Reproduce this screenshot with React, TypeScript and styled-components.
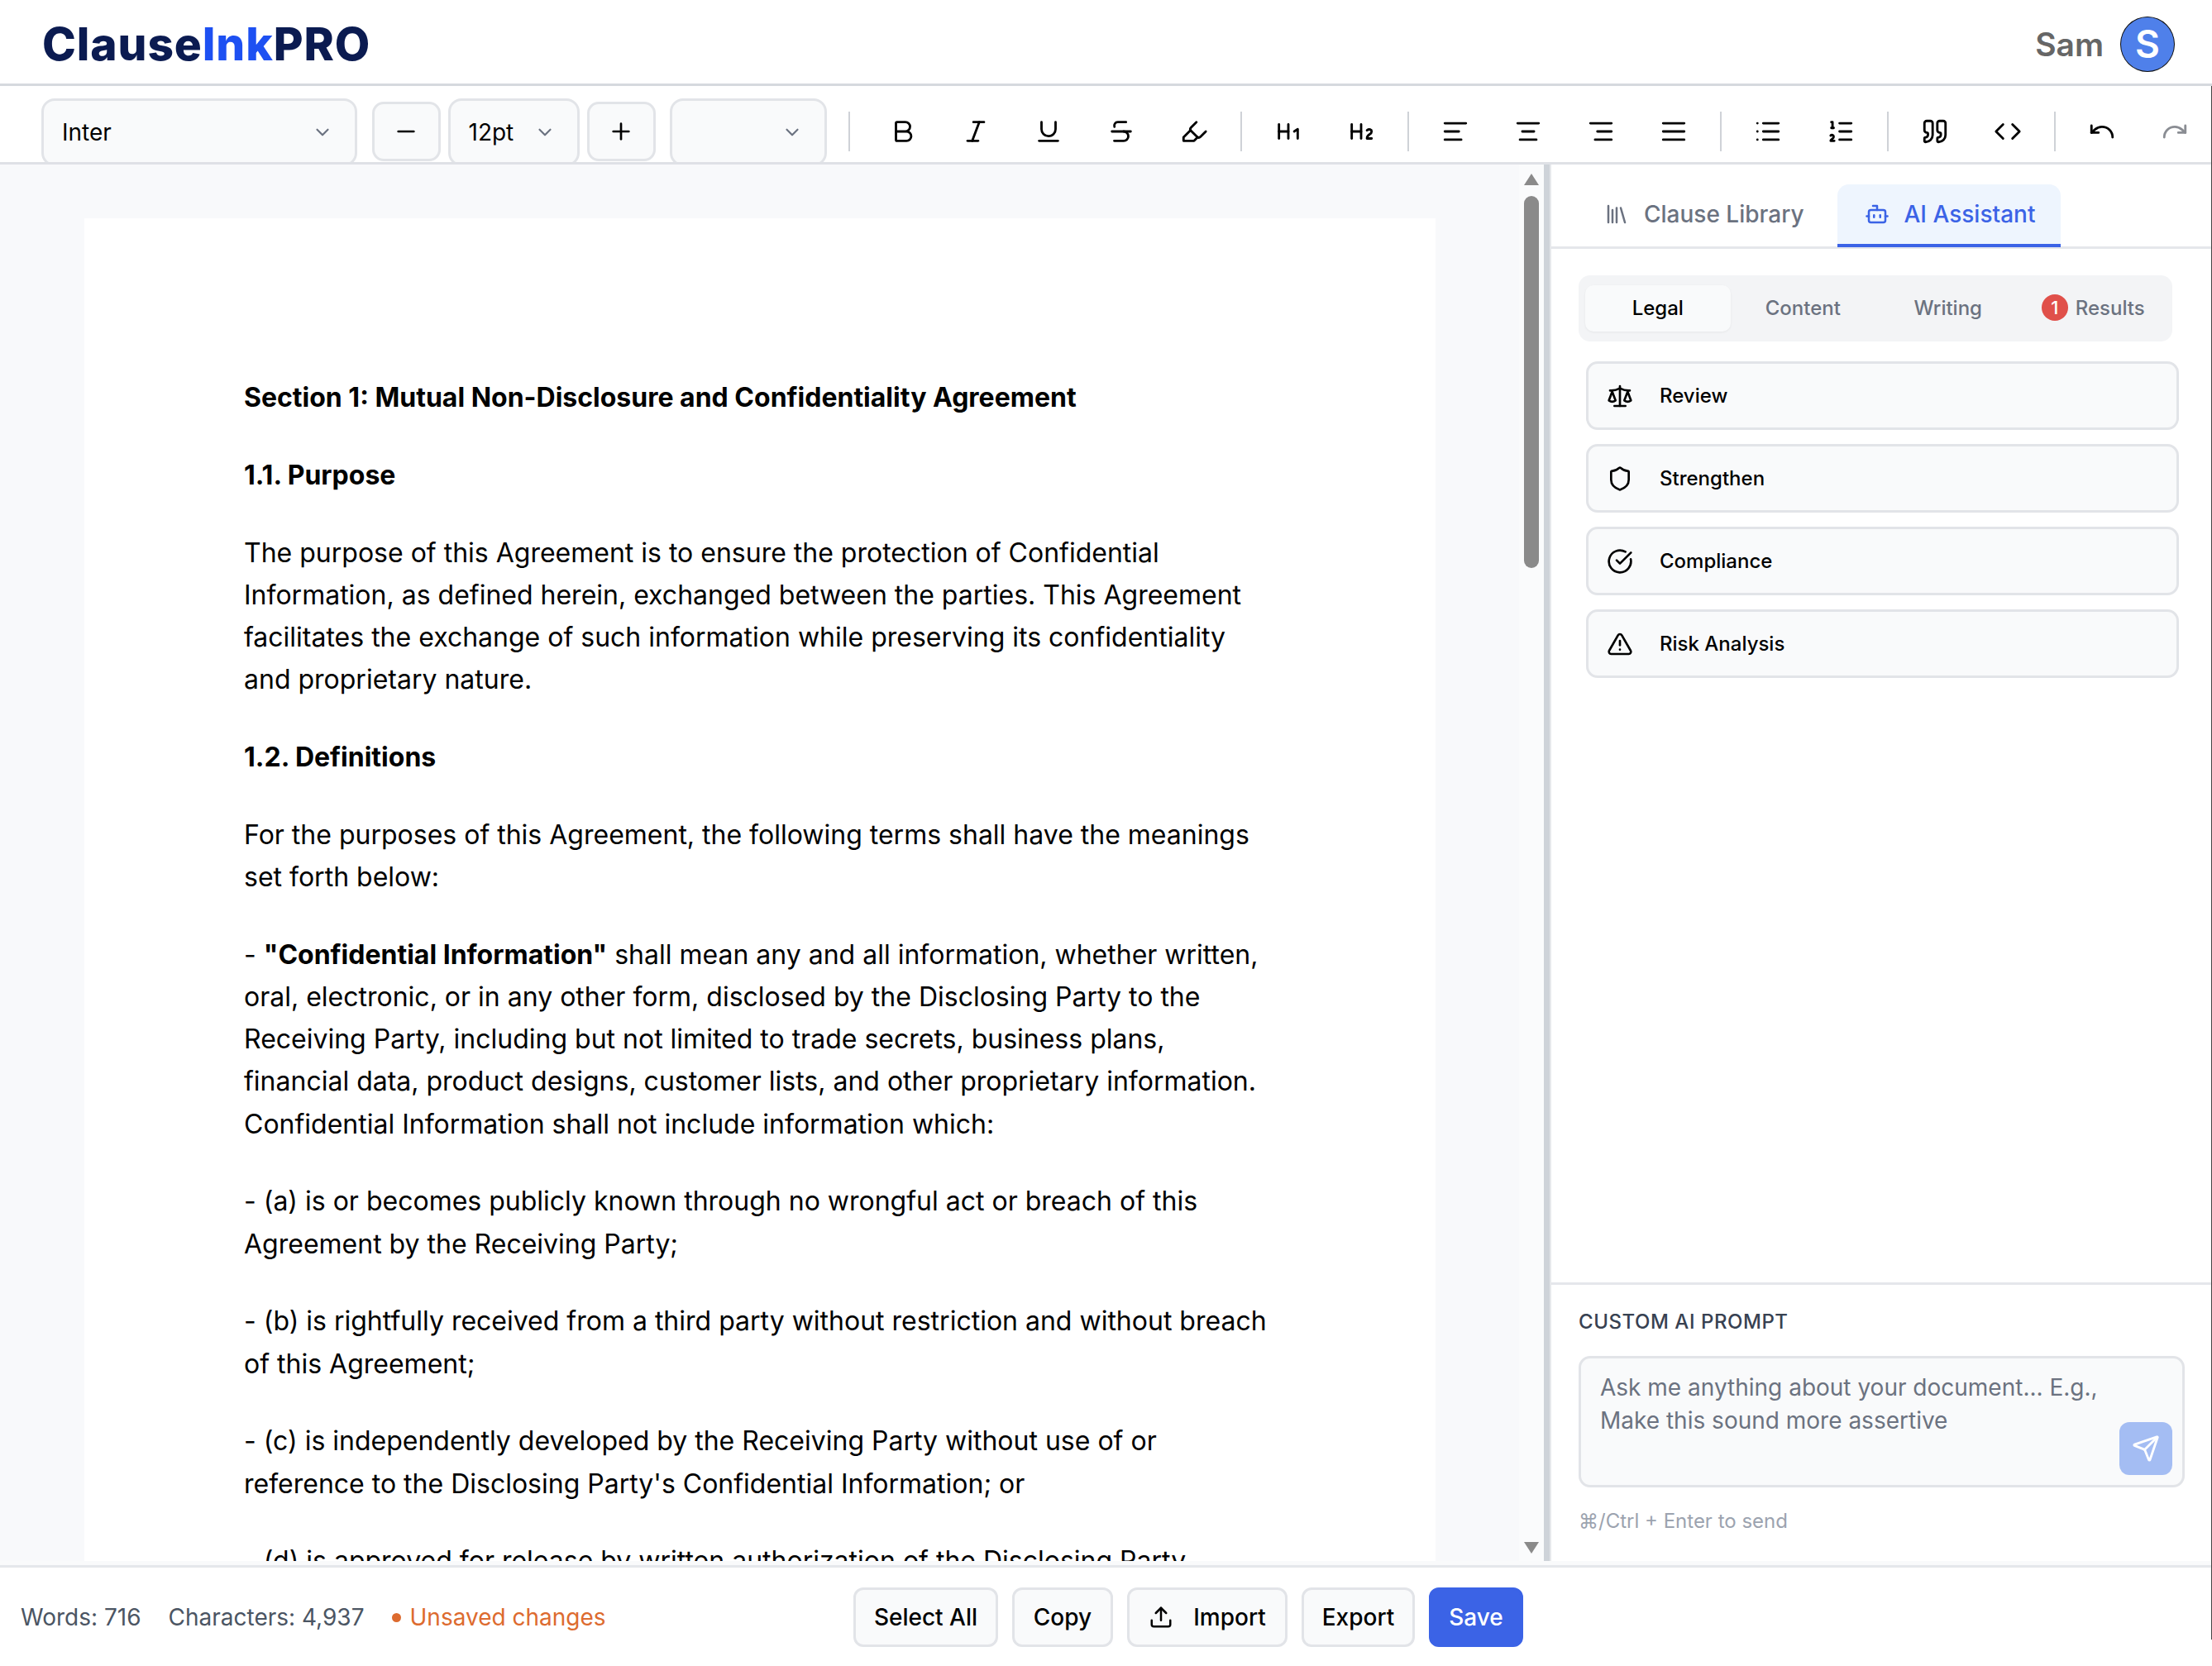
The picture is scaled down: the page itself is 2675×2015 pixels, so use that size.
import React from 'react';
import styled, { createGlobalStyle } from 'styled-components';
import {
  AlignCenter,
  AlignJustify,
  AlignLeft,
  AlignRight,
  Bold,
  Bot,
  ChevronDown,
  CircleCheckBig,
  Code,
  Heading1,
  Heading2,
  Highlighter,
  Italic,
  Library,
  List,
  ListOrdered,
  Minus,
  Plus,
  Quote,
  Redo,
  Scale,
  Send,
  Shield,
  Strikethrough,
  TriangleAlert,
  Underline,
  Undo,
  Upload,
} from 'lucide-react';

const GlobalStyle = createGlobalStyle`
  html, body {
    margin: 0;
    padding: 0;
    background: #fff;
  }
  body {
    font-family: Inter, "Liberation Sans", sans-serif;
    color: #000;
  }
  * {
    box-sizing: border-box;
  }
`;

const Shell = styled.div`
  position: relative;
  width: 2675px;
  height: 2015px;
  display: flex;
  flex-direction: column;
  overflow: hidden;
  background: #fff;

  &::after {
    content: '';
    position: absolute;
    top: 104px;
    right: 0;
    bottom: 32px;
    width: 1px;
    background: #444;
  }
`;

const Header = styled.header`
  height: 104px;
  flex: none;
  display: flex;
  align-items: center;
  justify-content: space-between;
  padding: 5px 45px 0 51px;
  border-bottom: 3px solid #d6d9de;
`;

const Logo = styled.div`
  font-size: 55px;
  font-weight: 800;
  letter-spacing: 0.9px;
  color: #0b1b51;
`;

const LogoAccent = styled.span`
  color: #1d50f2;
`;

const User = styled.div`
  display: flex;
  align-items: center;
  gap: 20px;
`;

const UserName = styled.span`
  font-size: 39px;
  font-weight: 600;
  color: #666;
`;

const Avatar = styled.div`
  width: 66px;
  height: 67px;
  border-radius: 50%;
  border: 1px solid #111;
  background: #4f80ea;
  color: #fff;
  font-size: 46px;
  font-weight: 600;
  display: flex;
  align-items: center;
  justify-content: center;
`;

const Toolbar = styled.div`
  height: 95px;
  flex: none;
  display: flex;
  align-items: flex-start;
  gap: 17.5px;
  padding: 15px 0 0 50px;
  border-bottom: 3px solid #dfe1e6;
  overflow: hidden;
`;

const Select = styled.div<{ $width: number }>`
  width: ${(p) => p.$width}px;
  height: 82px;
  flex: none;
  display: flex;
  align-items: center;
  justify-content: space-between;
  padding: 0 26px 0 22px;
  font-size: 28px;
  background: #f9fafb;
  border: 3px solid #e2e4e8;
  border-radius: 16px;
  color: #6b7280;

  span {
    color: #000;
  }
`;

const SizeGroup = styled.div`
  display: flex;
  align-items: flex-start;
  gap: 9px;
`;

const StepButton = styled.button`
  width: 83px;
  height: 72px;
  margin-top: 4px;
  flex: none;
  display: flex;
  align-items: center;
  justify-content: center;
  background: #f9fafb;
  border: 3px solid #e2e4e8;
  border-radius: 14px;
  color: #000;
  padding: 0;
`;

const ToolGroup = styled.div`
  display: flex;
  align-items: center;
  gap: 20px;
  height: 48px;
  margin: 16px 0 0 8px;
`;

const ToolButton = styled.div<{ $muted?: boolean }>`
  width: 68px;
  height: 48px;
  flex: none;
  display: flex;
  align-items: center;
  justify-content: center;
  color: ${(p) => (p.$muted ? '#8a8d93' : '#000')};
`;

const Divider = styled.div<{ $lead?: boolean }>`
  width: 2px;
  height: 48px;
  flex: none;
  margin: ${(p) => (p.$lead ? '0 10px 0 0' : '0 2px')};
  background: #cfd2d7;
`;

const Main = styled.div`
  flex: 1;
  min-height: 0;
  display: flex;
  padding-bottom: 5px;
  background: #f9fafb;
`;

const EditorArea = styled.div`
  flex: 1;
  min-width: 0;
  display: flex;
  background: #f8f9fb;
`;

const PageScroll = styled.div`
  flex: 1;
  min-width: 0;
  overflow: hidden;
  padding: 65px 101px 0 102px;
`;

const Page = styled.article`
  background: #fff;
  padding: 191px 194px 191px 193px;
  font-size: 32px;
  line-height: 51.2px;
  color: #000;

  p {
    margin: 0 0 42.6px;
  }

  strong {
    font-weight: 700;
  }
`;

const ScrollTrack = styled.div`
  width: 30px;
  flex: none;
  display: flex;
  flex-direction: column;
  align-items: center;
  justify-content: space-between;
  padding: 11px 0 9px;
  background: #fafbfc;
`;

const ScrollTop = styled.div`
  display: flex;
  flex-direction: column;
  align-items: center;
  gap: 13px;
`;

const ScrollArrow = styled.div<{ $down?: boolean }>`
  width: 0;
  height: 0;
  border-left: 9px solid transparent;
  border-right: 9px solid transparent;
  ${(p) => (p.$down ? 'border-top: 14px solid #8a8a8a;' : 'border-bottom: 14px solid #8a8a8a;')}
`;

const ScrollThumb = styled.div`
  width: 18px;
  height: 450px;
  border-radius: 9px;
  background: #8a8a8a;
`;

const Gutter = styled.div`
  width: 9px;
  flex: none;
  background: #ced3d9;
  border-right: 2px solid #e6e8eb;
`;

const Panel = styled.aside`
  width: 799px;
  flex: none;
  display: flex;
  flex-direction: column;
  background: #fff;
`;

const TabBar = styled.div`
  height: 102px;
  flex: none;
  display: flex;
  align-items: flex-end;
  gap: 9px;
  padding-left: 31px;
  border-bottom: 3px solid #e5e7eb;
`;

const Tab = styled.div<{ $active?: boolean }>`
  height: 76px;
  margin-bottom: -1px;
  display: flex;
  align-items: center;
  gap: 18px;
  padding: 0 31px 0 33px;
  font-size: 28px;
  font-weight: 500;
  border-radius: 14px 14px 0 0;
  color: ${(p) => (p.$active ? '#3b63e6' : '#6b7280')};
  background: ${(p) => (p.$active ? '#eef5fe' : 'transparent')};
  border-bottom: 4px solid ${(p) => (p.$active ? '#3b63e6' : 'transparent')};
`;

const PanelBody = styled.div`
  flex: 1;
  min-height: 0;
  padding: 32px 33px 0;
`;

const SubTabs = styled.div`
  width: 718px;
  height: 80px;
  display: grid;
  grid-template-columns: repeat(4, 1fr);
  padding: 12px 8px;
  margin-bottom: 24px;
  background: #f3f4f6;
  border-radius: 14px;
`;

const SubTab = styled.div<{ $active?: boolean }>`
  display: flex;
  align-items: center;
  justify-content: center;
  gap: 9px;
  padding-bottom: 2px;
  font-size: 24px;
  font-weight: 500;
  border-radius: 10px;
  color: ${(p) => (p.$active ? '#000' : '#6b7280')};
  background: ${(p) => (p.$active ? '#f9fafb' : 'transparent')};
  box-shadow: ${(p) => (p.$active ? '0 1px 3px rgba(0,0,0,0.06)' : 'none')};
`;

const Badge = styled.span`
  width: 32px;
  height: 32px;
  border-radius: 50%;
  background: #e0504a;
  color: #fff;
  font-size: 22px;
  display: flex;
  align-items: center;
  justify-content: center;
`;

const ActionList = styled.div`
  display: flex;
  flex-direction: column;
  gap: 17px;
  margin-left: 9px;
  width: 717px;
`;

const ActionButton = styled.div`
  height: 83px;
  display: flex;
  align-items: center;
  gap: 32px;
  padding: 0 22px;
  font-size: 24px;
  font-weight: 500;
  background: #f9fafb;
  border: 3px solid #e2e4e8;
  border-radius: 14px;
`;

const PromptBox = styled.div`
  height: 337px;
  flex: none;
  padding: 0 33px;
  border-top: 3px solid #e5e7eb;
`;

const PromptLabel = styled.div`
  margin-top: 30px;
  font-size: 24px;
  line-height: 30px;
  font-weight: 500;
  letter-spacing: 0.55px;
  color: #374151;
`;

const PromptInput = styled.div`
  position: relative;
  width: 733px;
  height: 159px;
  margin-top: 26px;
  padding: 15px 23px;
  font-size: 28px;
  line-height: 40px;
  color: #6b7280;
  background: #f9fafb;
  border: 3px solid #e2e4e8;
  border-radius: 14px;
`;

const SendButton = styled.div`
  position: absolute;
  right: 12px;
  bottom: 12px;
  width: 64px;
  height: 64px;
  display: flex;
  align-items: center;
  justify-content: center;
  border-radius: 12px;
  background: #a4bdf3;
  color: #fff;
`;

const PromptHint = styled.div`
  margin-top: 26px;
  font-size: 24px;
  line-height: 30px;
  color: #9ca3af;
`;

const Footer = styled.footer`
  height: 122px;
  flex: none;
  display: flex;
  align-items: center;
  padding: 1px 0 0 25px;
  border-top: 3px solid #e5e7eb;
  font-size: 28px;
  color: #4b5563;
`;

const Stats = styled.div`
  width: 1007px;
  flex: none;
  display: flex;
  align-items: center;
  gap: 33px;
`;

const Unsaved = styled.span`
  display: flex;
  align-items: center;
  gap: 11px;
  color: #dd6b2f;

  &::before {
    content: '';
    width: 11px;
    height: 11px;
    border-radius: 50%;
    background: #dd6b2f;
  }
`;

const FooterButtons = styled.div`
  display: flex;
  align-items: center;
  gap: 17px;
`;

const FooterButton = styled.div<{ $width: number; $primary?: boolean }>`
  width: ${(p) => p.$width}px;
  height: 72px;
  display: flex;
  align-items: center;
  justify-content: center;
  gap: 24px;
  font-size: 28px;
  font-weight: 500;
  border-radius: 12px;
  color: ${(p) => (p.$primary ? '#fff' : '#000')};
  background: ${(p) => (p.$primary ? '#3b63e6' : '#f9fafb')};
  border: 3px solid ${(p) => (p.$primary ? '#3b63e6' : '#e2e4e8')};
`;

const toolGroups = [
  [Bold, Italic, Underline, Strikethrough, Highlighter],
  [Heading1, Heading2],
  [AlignLeft, AlignCenter, AlignRight, AlignJustify],
  [List, ListOrdered],
  [Quote, Code],
];

const actions = [
  { icon: Scale, label: 'Review' },
  { icon: Shield, label: 'Strengthen' },
  { icon: CircleCheckBig, label: 'Compliance' },
  { icon: TriangleAlert, label: 'Risk Analysis' },
];

const paragraphs: React.ReactNode[] = [
  <strong>Section 1: Mutual Non-Disclosure and Confidentiality Agreement</strong>,
  <strong>1.1. Purpose</strong>,
  'The purpose of this Agreement is to ensure the protection of Confidential Information, as defined herein, exchanged between the parties. This Agreement facilitates the exchange of such information while preserving its confidentiality and proprietary nature.',
  <strong>1.2. Definitions</strong>,
  'For the purposes of this Agreement, the following terms shall have the meanings set forth below:',
  <>
    - <strong>"Confidential Information"</strong> shall mean any and all information, whether written, oral, electronic, or in any other form, disclosed by the Disclosing Party to the Receiving Party, including but not limited to trade secrets, business plans, financial data, product designs, customer lists, and other proprietary information. Confidential Information shall not include information which:
  </>,
  '- (a) is or becomes publicly known through no wrongful act or breach of this Agreement by the Receiving Party;',
  '- (b) is rightfully received from a third party without restriction and without breach of this Agreement;',
  "- (c) is independently developed by the Receiving Party without use of or reference to the Disclosing Party's Confidential Information; or",
  '- (d) is approved for release by written authorization of the Disclosing Party.',
];

const App: React.FC = () => (
  <Shell>
    <GlobalStyle />
    <Header>
      <Logo>
        Clause<LogoAccent>Ink</LogoAccent>PRO
      </Logo>
      <User>
        <UserName>Sam</UserName>
        <Avatar>S</Avatar>
      </User>
    </Header>

    <Toolbar>
      <Select $width={382}>
        <span>Inter</span>
        <ChevronDown size={26} />
      </Select>
      <SizeGroup>
        <StepButton>
          <Minus size={32} />
        </StepButton>
        <Select $width={159}>
          <span>12pt</span>
          <ChevronDown size={26} />
        </Select>
        <StepButton>
          <Plus size={32} />
        </StepButton>
      </SizeGroup>
      <Select $width={190}>
        <span />
        <ChevronDown size={26} />
      </Select>
      <ToolGroup>
        <Divider $lead />
        {toolGroups.map((group, i) => (
          <React.Fragment key={i}>
            {group.map((Icon, j) => (
              <ToolButton key={j}>
                <Icon size={34} />
              </ToolButton>
            ))}
            <Divider />
          </React.Fragment>
        ))}
        <ToolButton>
          <Undo size={34} />
        </ToolButton>
        <ToolButton $muted>
          <Redo size={34} />
        </ToolButton>
      </ToolGroup>
    </Toolbar>

    <Main>
      <EditorArea>
        <PageScroll>
          <Page>
            {paragraphs.map((text, i) => (
              <p key={i}>{text}</p>
            ))}
          </Page>
        </PageScroll>
        <ScrollTrack>
          <ScrollTop>
            <ScrollArrow />
            <ScrollThumb />
          </ScrollTop>
          <ScrollArrow $down />
        </ScrollTrack>
      </EditorArea>
      <Gutter />
      <Panel>
        <TabBar>
          <Tab>
            <Library size={30} />
            Clause Library
          </Tab>
          <Tab $active>
            <Bot size={30} />
            AI Assistant
          </Tab>
        </TabBar>
        <PanelBody>
          <SubTabs>
            <SubTab $active>Legal</SubTab>
            <SubTab>Content</SubTab>
            <SubTab>Writing</SubTab>
            <SubTab>
              <Badge>1</Badge>
              Results
            </SubTab>
          </SubTabs>
          <ActionList>
            {actions.map(({ icon: Icon, label }) => (
              <ActionButton key={label}>
                <Icon size={32} />
                {label}
              </ActionButton>
            ))}
          </ActionList>
        </PanelBody>
        <PromptBox>
          <PromptLabel>CUSTOM AI PROMPT</PromptLabel>
          <PromptInput>
            Ask me anything about your document... E.g.,
            <br />
            Make this sound more assertive
            <SendButton>
              <Send size={34} />
            </SendButton>
          </PromptInput>
          <PromptHint>⌘/Ctrl + Enter to send</PromptHint>
        </PromptBox>
      </Panel>
    </Main>

    <Footer>
      <Stats>
        <span>Words: 716</span>
        <span>Characters: 4,937</span>
        <Unsaved>Unsaved changes</Unsaved>
      </Stats>
      <FooterButtons>
        <FooterButton $width={175}>Select All</FooterButton>
        <FooterButton $width={122}>Copy</FooterButton>
        <FooterButton $width={194}>
          <Upload size={30} />
          Import
        </FooterButton>
        <FooterButton $width={137}>Export</FooterButton>
        <FooterButton $width={114} $primary>
          Save
        </FooterButton>
      </FooterButtons>
    </Footer>
  </Shell>
);

export default App;
